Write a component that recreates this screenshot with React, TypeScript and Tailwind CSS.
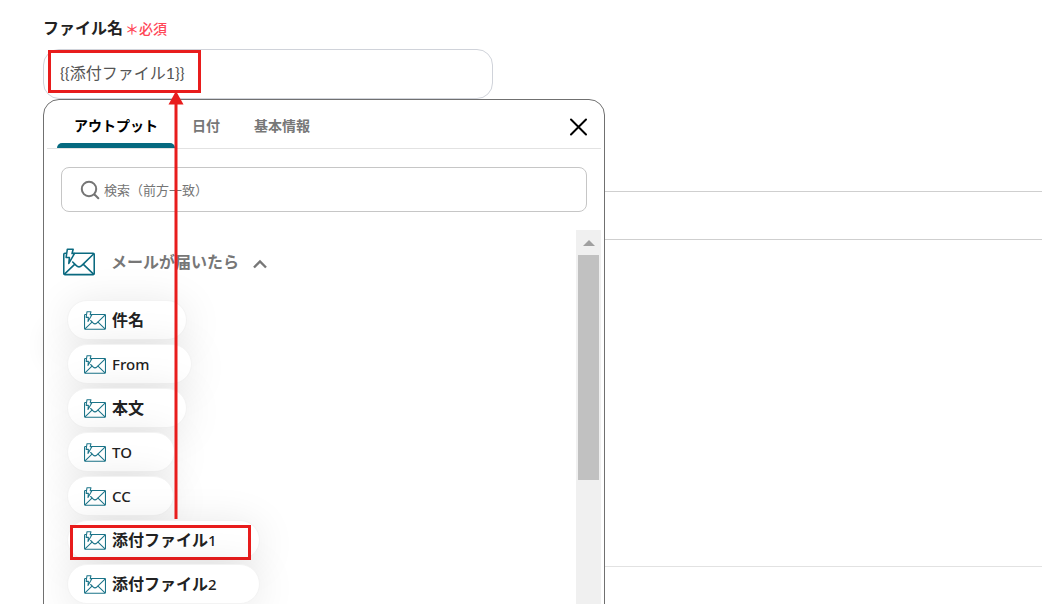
import { useState } from 'react'

const TABS = ['アウトプット', '日付', '基本情報']

const OUTPUTS = [
  { label: '件名', marked: false },
  { label: 'From', marked: false },
  { label: '本文', marked: false },
  { label: 'TO', marked: false },
  { label: 'CC', marked: false },
  { label: '添付ファイル1', marked: true },
  { label: '添付ファイル2', marked: false },
]

function MailIcon({ className }: { className: string }) {
  return (
    <svg viewBox="0 0 33 28" fill="none" stroke="currentColor" strokeWidth="1.6" strokeLinejoin="round" strokeLinecap="round" className={className} aria-hidden="true">
      <path d="M11 5H31a1.2 1.2 0 0 1 1.2 1.2V25.8A1.2 1.2 0 0 1 31 27H2A1.2 1.2 0 0 1 .8 25.8V6.2A1.2 1.2 0 0 1 2 5H3" />
      <path d="M31.5 5.8 19.5 17.5Q16.5 20.5 13.5 17.5L10 14" />
      <path d="M1.5 26.5 12 16.5M31.5 26.5 21 16.5" />
      <path d="M4.5.8H10.5L9.3 5.3H11.8L6 15.5 6.6 9.3H3.2Z" />
    </svg>
  )
}

function OutputChip({ label, marked, onPick }: { label: string; marked: boolean; onPick: (label: string) => void }) {
  // latin letters and digits are set lighter than the Japanese
  const parts = label.split(/([A-Za-z0-9]+)/).filter(Boolean)

  return (
    <li className="relative flex">
      <button
        type="button"
        onClick={() => onPick(label)}
        className="flex h-10 items-center gap-1.5 rounded-full border border-[#f3f3f3] bg-white pl-4 pr-[42px] text-base font-bold text-[#222] shadow-[0_4px_40px_rgba(0,0,0,0.1)]"
      >
        <MailIcon className="h-[19px] w-[22px] text-[#1b7489]" />
        <span>
          {parts.map((part) => (
            <span key={part} className={/^[A-Za-z0-9]/.test(part) ? 'text-[15px] font-medium' : ''}>
              {part}
            </span>
          ))}
        </span>
      </button>
      {marked && <span className="pointer-events-none absolute left-[3px] top-[5px] h-[35px] w-[181px] border-3 border-[#e81c1c]" />}
    </li>
  )
}

function Scrollbar() {
  return (
    <div className="flex w-[25px] shrink-0 flex-col items-center bg-[#f0f0f0]">
      <div className="flex h-[25px] items-center">
        <svg viewBox="0 0 12 6" className="h-1.5 w-3" aria-hidden="true">
          <path d="M0 6 6 0l6 6z" fill="#a0a0a0" />
        </svg>
      </div>
      <div className="h-[225px] w-[21px] bg-[#c1c1c1]" />
    </div>
  )
}

function OutputPicker({ onPick }: { onPick: (label: string) => void }) {
  const [tab, setTab] = useState(TABS[0])
  const [query, setQuery] = useState('')
  const [open, setOpen] = useState(true)

  return (
    <div className="absolute left-0 top-full flex h-[640px] w-[562px] flex-col rounded-t-2xl border border-[#707070] bg-white px-[3px]">
      <div className="flex h-[49px] items-stretch border-b border-[#e2e2e2] pl-2.5 pr-3">
        <div role="tablist" className="flex flex-1">
          {TABS.map((name) => (
            <button
              key={name}
              type="button"
              role="tab"
              aria-selected={tab === name}
              onClick={() => setTab(name)}
              className={`relative px-[17px] pt-1 text-sm font-semibold ${tab === name ? 'text-black' : 'text-[#777]'}`}
            >
              {name}
              {tab === name && <span className="absolute inset-x-0 bottom-0 h-[5px] rounded-t-md bg-[#056a80]" />}
            </button>
          ))}
        </div>
        <button type="button" aria-label="閉じる" className="flex items-center pt-1.5">
          <svg viewBox="0 0 20 20" className="size-5" stroke="#000" strokeWidth="2" strokeLinecap="round" aria-hidden="true">
            <path d="M2 2.5 17 17.5M17 2.5 2 17.5" />
          </svg>
        </button>
      </div>

      <label className="mx-3.5 mt-[18px] flex h-[45px] shrink-0 items-center gap-1 rounded-lg border border-[#c6c6c6] pl-[18px]">
        <svg viewBox="0 0 20 20" className="size-5" fill="none" stroke="#757575" strokeWidth="2" strokeLinecap="round" aria-hidden="true">
          <circle cx="9" cy="9" r="7.2" />
          <path d="m14.5 14.5 3.8 3.8" />
        </svg>
        <input
          value={query}
          onChange={(e) => setQuery(e.target.value)}
          placeholder="検索（前方一致）"
          aria-label="検索"
          className="flex-1 pt-0.5 text-[13px] outline-none placeholder:text-[#757575]"
        />
      </label>

      <div className="mt-[18px] flex min-h-0 flex-1">
        <div className="flex-1 overflow-hidden pl-4 pt-4">
          <button type="button" onClick={() => setOpen(!open)} className="flex h-8 items-center font-bold text-[#777]">
            <MailIcon className="h-7 w-8 text-[#0b6a80]" />
            <span className="ml-4">メールが届いたら</span>
            <svg viewBox="0 0 14 10" className="ml-3.5 mt-1 h-2.5 w-3.5" fill="none" stroke="#777" strokeWidth="2.4" aria-hidden="true">
              <path d="M1 8.5 7 2.5l6 6" />
            </svg>
          </button>
          {open && (
            <ul className="ml-1 mt-[22px] flex flex-col gap-1">
              {OUTPUTS.filter((o) => o.label.startsWith(query)).map((o) => (
                <OutputChip key={o.label} label={o.label} marked={o.marked} onPick={onPick} />
              ))}
            </ul>
          )}
        </div>
        <Scrollbar />
      </div>
    </div>
  )
}

export default function App() {
  const [fileName, setFileName] = useState('{{添付ファイル1}}')

  return (
    <main className="h-screen overflow-hidden bg-white pt-4 font-['Noto_Sans','Noto_Sans_CJK_JP',sans-serif] text-[#222]">
      <div className="relative z-10 ml-[43px] w-[450px]">
        <label htmlFor="file-name" className="flex h-[33px] items-start gap-0.5 font-bold">
          ファイル名
          <span className="pt-[3px] text-sm font-medium text-[#ff4757]">＊必須</span>
        </label>
        <input
          id="file-name"
          value={fileName}
          onChange={(e) => setFileName(e.target.value)}
          className="block h-[50px] w-full rounded-2xl border border-[#d0d3da] px-4 pb-1 font-['Lato','Noto_Sans_CJK_JP',sans-serif] text-base text-[#555] outline-none"
        />
        {/* soft shadow of the round handle that sits under the panel */}
        <span className="absolute left-1 top-[305px] size-12 rounded-full shadow-[0_0_24px_rgba(0,0,0,0.08)]" />
        <OutputPicker onPick={(label) => setFileName(`{{${label}}}`)} />

        {/* callout from the picked output up to the field */}
        <span className="pointer-events-none absolute left-[5px] top-[34px] h-[43px] w-[153px] border-3 border-[#e81c1c]" />
        <svg viewBox="0 0 16 428" className="pointer-events-none absolute left-[125px] top-[75px] h-[428px] w-4" aria-hidden="true">
          <path d="M8 10V428" stroke="#e81c1c" strokeWidth="3" />
          <path d="M8 0 15.5 13.5H.5z" fill="#e81c1c" />
        </svg>
      </div>

      <div className="ml-[43px] mt-[92px] h-[49px] border-y border-[#cfcfcf]" />
      <div className="ml-[43px] h-[327px] border-b border-[#e2e2e2]" />
    </main>
  )
}
